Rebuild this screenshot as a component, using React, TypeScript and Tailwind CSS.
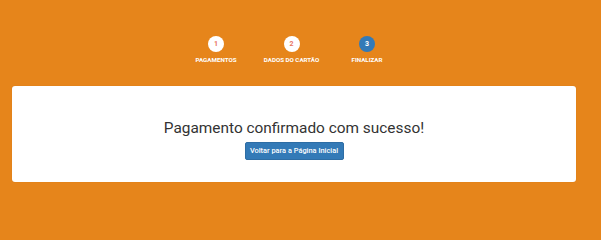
const steps = [
  { n: 1, label: "PAGAMENTOS", active: false },
  { n: 2, label: "DADOS DO CARTÃO", active: false },
  { n: 3, label: "FINALIZAR", active: true },
];

export default function App() {
  return (
    <div
      className="w-[601px] h-[209px] min-h-screen bg-[#e6851b] pl-[12px] pr-[25px] pt-[36px]"
      style={{ fontFamily: "Roboto, 'Liberation Sans', sans-serif" }}
    >
      <div className="flex justify-center pr-[5px]">
        {steps.map((s) => (
          <div key={s.n} className="w-[75.5px] flex flex-col items-center">
            <div
              className={`w-[16px] h-[16px] rounded-full flex items-center justify-center text-[7px] font-bold ${
                s.active ? "bg-[#337ab7] text-white" : "bg-white text-[#e8735e]"
              }`}
            >
              {s.n}
            </div>
            <div className="mt-[4px] text-[6.2px] leading-[8px] font-bold text-white whitespace-nowrap">
              {s.label}
            </div>
          </div>
        ))}
      </div>

      <div className="mt-[22px] h-[96px] bg-white rounded-[3px] shadow-[0_0_1px_rgba(0,0,0,0.15)] flex flex-col items-center pt-[33px]">
        <h1 className="text-[15.4px] leading-[19px] text-[#333333]">
          Pagamento confirmado com sucesso!
        </h1>
        <button className="mt-[4px] h-[18px] w-[99px] rounded-[2px] bg-[#337ab7] border border-[#2e6da4] text-white text-[7.4px] font-medium leading-none">
          Voltar para a Página Inicial
        </button>
      </div>
    </div>
  );
}
